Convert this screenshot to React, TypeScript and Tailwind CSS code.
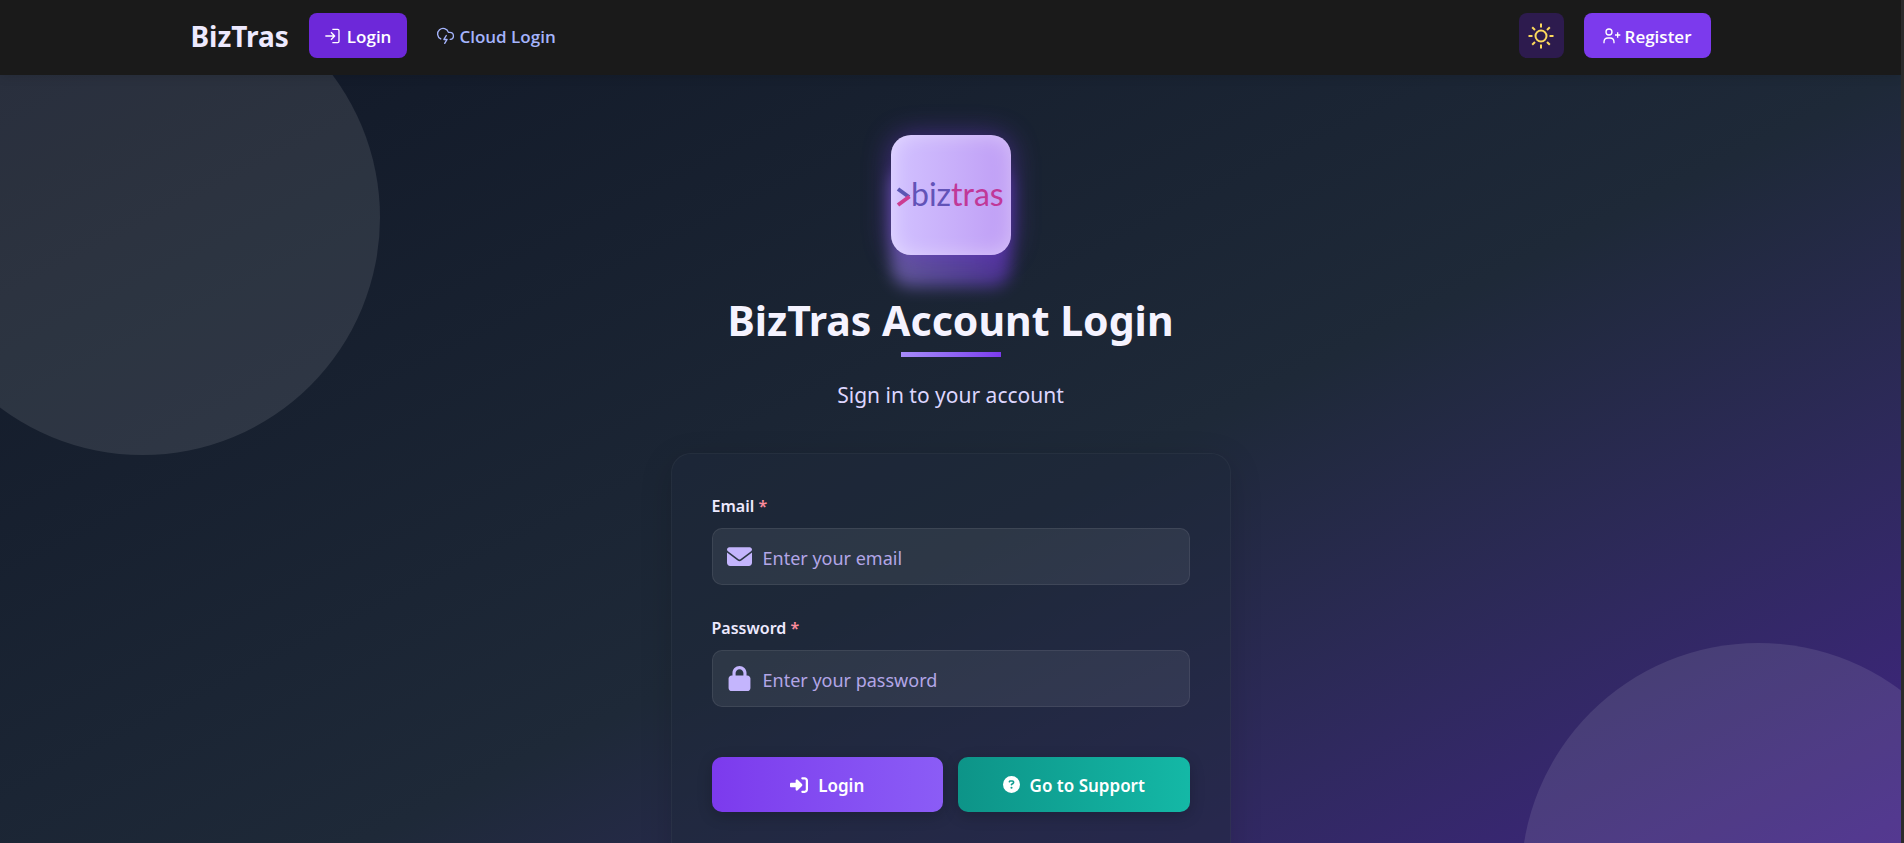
import type { ReactNode } from "react";
import { FaCircleQuestion, FaEnvelope, FaLock, FaRightToBracket } from "react-icons/fa6";
import { CloudLightning } from "lucide-react";

function LoginIcon() {
  return (
    <svg viewBox="0 0 24 24" className="size-4" fill="none" stroke="currentColor" strokeWidth="2" strokeLinejoin="round" aria-hidden="true">
      <path d="M11 2h8a2 2 0 0 1 2 2v16a2 2 0 0 1-2 2h-8" />
      <path d="M0.5 12h14M9 6.5l5.500 5.500-5.500 5.500" />
    </svg>
  );
}

function UserPlusIcon() {
  return (
    <svg viewBox="0 0 54 48" className="h-4 w-[18px]" fill="none" stroke="currentColor" strokeWidth="4" aria-hidden="true">
      <circle cx="18" cy="12" r="9" />
      <path d="M3 46v-4c0-8 5-12 12-12h6c7 0 12 4 12 12v4" />
      <path d="M44 13v16M36 21h16" />
    </svg>
  );
}

function SunIcon() {
  return (
    <svg viewBox="0 0 26 26" className="size-[26px]" fill="none" stroke="currentColor" strokeWidth="2" aria-hidden="true">
      <circle cx="13" cy="13" r="5.500" />
      <path d="M13 0.500v4M13 21.500v4M0.500 13h4M21.500 13h4M4.200 4.200l2.800 2.800M19 19l2.800 2.800M4.200 21.800l2.800-2.800M19 7l2.800-2.800" />
    </svg>
  );
}

function Logo() {
  return (
    <div className="relative size-[120px]">
      <div className="absolute inset-0 translate-y-8 rounded-[20px] bg-linear-to-r from-[#a78bfa] to-[#7c3aed] opacity-50 blur-[8px]" />
      <div className="relative flex size-full items-center justify-center rounded-[20px] bg-linear-to-r from-[#d2c2ff] to-[#bf9df5] shadow-[0_0_28px_rgba(124,58,237,0.45),inset_0_0_20px_rgba(255,255,255,0.4)]">
        <svg viewBox="0 0 120 120" className="size-full" role="img" aria-label="biztras">
          <path d="M7 54l11 8" stroke="#5a55b4" strokeWidth="4" fill="none" />
          <path d="M18.500 61.500L7 70" stroke="#cc3d92" strokeWidth="4" fill="none" />
          <text x="20" y="71" fontSize="32" className="font-['Lato',sans-serif]">
            <tspan fill="#6253b8">biz</tspan>
            <tspan fill="#c03898">tras</tspan>
          </text>
        </svg>
      </div>
    </div>
  );
}

type FieldProps = { id: string; label: string; type: string; placeholder: string; icon: ReactNode };

function Field({ id, label, type, placeholder, icon }: FieldProps) {
  return (
    <div className="flex flex-col gap-2.5">
      <label htmlFor={id} className="text-base leading-6 font-semibold text-[#ede9fe]">
        {label} <span className="text-[#fb8c9c]">*</span>
      </label>
      <div className="flex h-[57px] items-center gap-[11px] rounded-[10px] border border-white/[0.08] bg-white/[0.07] px-3.5">
        <span className="flex w-[25px] shrink-0 justify-center text-[25px] text-[#c4b5fd]">{icon}</span>
        <input
          id={id}
          type={type}
          placeholder={placeholder}
          required
          className="h-full min-w-0 flex-1 bg-transparent pt-0.5 text-lg text-[#ede9fe] placeholder-[#b3a6e6] outline-none"
        />
      </div>
    </div>
  );
}

export default function App() {
  return (
    <div className="h-dvh overflow-x-hidden overflow-y-auto border-r-[3px] border-[#2b2b2b] bg-[#1a1a1a] font-['Noto_Sans','Open_Sans',sans-serif] [scrollbar-width:none]">
      <header className="relative z-10 bg-[#1a1a1a] shadow-[0_2px_10px_rgba(0,0,0,0.1)]">
        <nav className="mx-auto flex h-[75px] max-w-[1520px] items-center justify-between pb-1 font-['Open_Sans','Noto_Sans',sans-serif] text-[17px] font-semibold">
          <div className="flex items-center gap-3.5">
            <a href="#" className="mr-1.5 font-['Noto_Sans','Open_Sans',sans-serif] text-[28px] font-bold text-[#ede9fe]">BizTras</a>
            <a href="#login" className="flex h-[45px] items-center gap-1.5 rounded-lg bg-[#6d28d9] px-4 text-white">
              <LoginIcon />
              <span className="pt-0.5">Login</span>
            </a>
            <a href="#cloud" className="flex h-[45px] items-center gap-1 rounded-lg px-[15px] text-[#a5b4fc]">
              <CloudLightning size={19} strokeWidth={1.7} aria-hidden="true" />
              <span className="pt-0.5">Cloud Login</span>
            </a>
          </div>
          <div className="flex items-center gap-5">
            <button type="button" aria-label="Switch theme" className="flex size-[45px] items-center justify-center rounded-lg bg-[#2d1b4e] text-[#fcd95c]">
              <SunIcon />
            </button>
            <a href="#register" className="flex h-[45px] items-center gap-1 rounded-lg bg-[#7c3aed] px-[19px] text-white">
              <UserPlusIcon />
              <span className="pt-0.5">Register</span>
            </a>
          </div>
        </nav>
      </header>

      <main className="relative flex min-h-[948px] flex-col items-center overflow-hidden bg-linear-to-br from-[#111827] via-[#1e2938] to-[#4a1a98] px-4 py-15">
        <div className="absolute top-[-10%] left-[-5%] aspect-square w-1/4 rounded-full bg-white/10" />
        <div className="absolute right-[-5%] bottom-[-10%] aspect-square w-1/4 rounded-full bg-white/10" />

        <Logo />
        <h1 className="relative mt-[39px] text-center text-[41px] leading-[52px] font-bold text-[#f5f3ff]">BizTras Account Login</h1>
        <div className="relative mt-1.5 h-[5px] w-[100px] bg-linear-to-r from-[#a78bfa] to-[#7c3aed]" />
        <p className="relative mt-[22px] text-[21px] leading-8 text-[#ddd6fe]">Sign in to your account</p>

        <form
          className="relative mt-[42px] w-full max-w-[560px] flex-1 rounded-[20px] border border-white/[0.04] bg-[#1d283a]/50 p-10 shadow-[0_8px_32px_rgba(0,0,0,0.15)]"
          onSubmit={(e) => e.preventDefault()}
        >
          <div className="flex flex-col gap-[31px]">
            <Field id="email" label="Email" type="email" placeholder="Enter your email" icon={<FaEnvelope />} />
            <Field id="password" label="Password" type="password" placeholder="Enter your password" icon={<FaLock />} />
          </div>
          <div className="mt-[50px] grid grid-cols-2 gap-[15px] text-[17px] font-semibold text-white">
            <button type="submit" className="flex h-[55px] items-center justify-center gap-2.5 rounded-[10px] bg-linear-to-r from-[#7c3aed] to-[#8b5cf6] shadow-[0_4px_15px_rgba(0,0,0,0.2)]">
              <FaRightToBracket className="size-[18px]" />
              <span className="pt-0.5">Login</span>
            </button>
            <button type="button" className="flex h-[55px] items-center justify-center gap-2.5 rounded-[10px] bg-linear-to-r from-[#0d9488] to-[#14b8a6] shadow-[0_4px_15px_rgba(0,0,0,0.2)]">
              <FaCircleQuestion className="size-[17px]" />
              <span className="pt-0.5">Go to Support</span>
            </button>
          </div>
        </form>
      </main>
    </div>
  );
}
